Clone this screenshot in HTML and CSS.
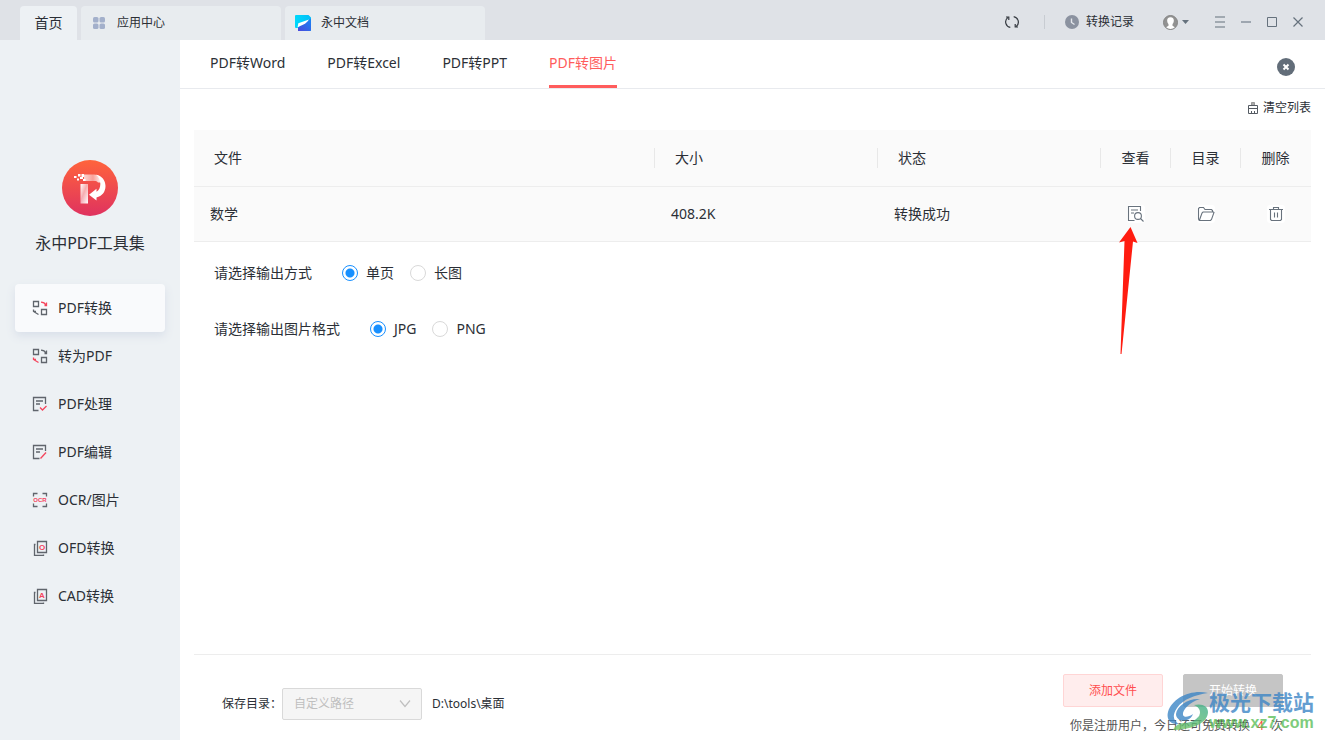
FILE: index.html
```
<!DOCTYPE html>
<html lang="zh-CN">
<head>
<meta charset="utf-8">
<title>永中PDF工具集</title>
<link rel="stylesheet" href="styles.css">
</head>
<body>
<header class="titlebar">
  <nav class="tabs">
    <button class="tab tab-home">首页</button>
    <button class="tab tab-app">
      <svg width="12" height="12" viewBox="0 0 12 12" fill="#a3b0cb"><rect width="5.500" height="5.500" rx="1.600"/><rect x="6.500" width="5.500" height="5.500" rx="1.600"/><rect y="6.500" width="5.500" height="5.500" rx="1.600"/><rect x="6.500" y="6.500" width="5.500" height="5.500" rx="1.600"/></svg>
      <span>应用中心</span>
    </button>
    <button class="tab tab-doc">
      <svg width="16" height="16" viewBox="0 0 16 16"><defs><linearGradient id="docTop" x1="0" y1="0" x2="1" y2="0"><stop offset="0" stop-color="#00d9fb"/><stop offset="1" stop-color="#03bdf8"/></linearGradient><linearGradient id="docLow" x1="0" y1="1" x2="1" y2="0"><stop offset="0" stop-color="#4a48dc"/><stop offset="1" stop-color="#1687f5"/></linearGradient></defs><path d="M1 0h12.500l2.500 2.500V15a1 1 0 0 1-1 1H3V13H1a1 1 0 0 1-1-1V1a1 1 0 0 1 1-1z" fill="url(#docTop)"/><path d="M16 3.500V15a1 1 0 0 1-1 1H3v-3.500z" fill="url(#docLow)"/><path d="M14 4.500 3.300 8.300 2.500 12.500l2-1.200c4-1.500 7.500-3.300 9.500-6.800z" fill="#fff"/></svg>
      <span>永中文档</span>
    </button>
  </nav>
  <div class="tools">
    <button class="icon-btn refresh" aria-label="刷新"><svg width="14" height="14" viewBox="0 0 14 14" fill="none" stroke="#33383f" stroke-width="1.200"><path d="M5.300 12.300A5.500 5.500 0 0 1 2.700 2.600M1 2h2.800v3M8.700 1.700a5.500 5.500 0 0 1 2.600 9.700M13 12h-2.800V9"/></svg></button>
    <span class="divider"></span>
    <button class="icon-btn history"><svg width="14" height="14" viewBox="0 0 14 14"><circle cx="7" cy="7" r="7" fill="#8b92a0"/><path d="M6.500 3.500v4l3 2" fill="none" stroke="#e4e7ec" stroke-width="1.400"/></svg><span>转换记录</span></button>
    <button class="icon-btn user" aria-label="用户"><svg width="26" height="15" viewBox="0 0 26 15"><circle cx="7.500" cy="7.500" r="7" fill="#929292" stroke="#858585"/><path d="M7.500 2.300c2.600 0 3.500 1.600 3.300 3.800-.1 1.500-.8 2.500-1.300 3.200v1.400l2.400 1.600a6.500 6.500 0 0 1-8.800 0l2.400-1.600V9.300C5 8.600 4.300 7.600 4.200 6.100 4 3.900 4.900 2.300 7.500 2.300z" fill="#fff"/><path d="M19 5h7l-3.500 4z" fill="#65717d"/></svg></button>
    <button class="icon-btn" aria-label="菜单"><svg width="12" height="12" viewBox="0 0 12 12" stroke="#65717d" stroke-width="1.200"><path d="M1 1h10M1 6h10M1 11h10"/></svg></button>
    <button class="icon-btn" aria-label="最小化"><svg width="12" height="12" viewBox="0 0 12 12" stroke="#7b8691"><path d="M1 6h10" stroke-width="1.300"/></svg></button>
    <button class="icon-btn" aria-label="最大化"><svg width="12" height="12" viewBox="0 0 12 12" fill="none" stroke="#65717d"><path d="M1.500 1.500h9v9h-9z"/></svg></button>
    <button class="icon-btn" aria-label="关闭窗口"><svg width="12" height="12" viewBox="0 0 12 12" stroke="#65717d" stroke-width="1.200"><path d="m1.500 1.500 9 9m0-9-9 9"/></svg></button>
  </div>
</header>
<div class="shell">
  <aside class="sidebar">
    <div class="brand">
      <svg width="56" height="56" viewBox="0 0 56 56"><defs><linearGradient id="disc" x1="0" y1="0" x2="0" y2="1"><stop offset="0" stop-color="#ff643c"/><stop offset="1" stop-color="#df325f"/></linearGradient><linearGradient id="arc" x1="0" y1="0" x2="1" y2="0"><stop offset="0" stop-color="#fff" stop-opacity=".75"/><stop offset=".5" stop-color="#fff" stop-opacity=".45"/><stop offset="1" stop-color="#fff"/></linearGradient><linearGradient id="stem" x1="0" y1="0" x2="1" y2="1"><stop offset="0" stop-color="#fff"/><stop offset=".45" stop-color="#fff" stop-opacity=".55"/><stop offset="1" stop-color="#fff"/></linearGradient></defs><circle cx="28" cy="28" r="28" fill="url(#disc)"/><path d="M22 14.500h10c5 0 8 3 8 8h-4c-1-1.200-2-1.500-3.500-1.500H22z" fill="url(#arc)"/><path d="M34 14.700c5.800.8 9.500 5.600 9.500 11.300 0 6-3.500 10-9 11.500v2.900L27 34.800l7.500-6v3c5-2.500 5.500-12.800-.5-17.100z" fill="#fff"/><path d="M18.500 24H26v19.500h-7.500z" fill="url(#stem)"/><path d="M12 16h2.500v2H12zm3 2.500h2v2h-2zM16 14h2.500v2.500H16zm3.500 0H22V17h-2.500zM18 17h3v2h-3zm3 2h2.500v2H21z" fill="#fff"/></svg>
      <h1>永中PDF工具集</h1>
    </div>
    <nav class="menu">
      <a class="item active" href="#"><svg class="ico" viewBox="0 0 16 16"><path d="M1.500 1.500h5v5h-5zM9.500 9.500h5v5h-5z"/><path d="M1.500 9.500v2l5 3M1.500 11.300h2.500"/><path class="red" d="M9 2.200c2.500 0 4 1 5 3M14.500 2.500v3h-2"/></svg>PDF转换</a>
      <a class="item" href="#"><svg class="ico" viewBox="0 0 16 16"><path d="M1.500 1.500h5v5h-5zM9.500 9.500h5v5h-5z"/><path class="red" d="M1.500 9.500v2l5 3M1.500 11.300h2.500"/><path d="M9 2.200c2.500 0 4 1 5 3M14.500 2.500v3h-2"/></svg>转为PDF</a>
      <a class="item" href="#"><svg class="ico" viewBox="0 0 16 16"><path d="M13.500 8V1.500h-12v13h5M4 5h7M4 8h4"/><path class="red" d="m8 11.500 2.500 2.500 4-4"/></svg>PDF处理</a>
      <a class="item" href="#"><svg class="ico" viewBox="0 0 16 16"><path d="M13.500 7V1.500h-12v13h6M4 5h7M4 8h4"/><path class="red" d="m8.500 14.500 5.500-6"/></svg>PDF编辑</a>
      <a class="item" href="#"><svg class="ico" viewBox="0 0 16 16"><path d="M1.500 4.500v-3h4M10.500 1.500h4v3M1.500 11.500v3h4M10.500 14.500h4v-3"/><text class="ocr" x="8" y="10">OCR</text></svg>OCR/图片</a>
      <a class="item" href="#"><svg class="ico" viewBox="0 0 16 16"><path d="M5.500 1.500h9v11h-9zM3.500 4.500h-1v11h9v-1"/><text class="letter" x="10" y="10">O</text></svg>OFD转换</a>
      <a class="item" href="#"><svg class="ico" viewBox="0 0 16 16"><path d="M5.500 1.500h9v11h-9zM3.500 4.500h-1v11h9v-1"/><text class="letter" x="10" y="10">A</text></svg>CAD转换</a>
    </nav>
  </aside>
  <main class="main">
    <div class="subtabs">
      <nav class="subnav">
        <a href="#">PDF转Word</a><a href="#">PDF转Excel</a><a href="#">PDF转PPT</a><a class="current" href="#">PDF转图片</a>
      </nav>
      <button class="close" aria-label="关闭"><svg width="18" height="18" viewBox="0 0 18 18"><circle cx="9" cy="9" r="9" fill="#626d79"/><path d="m6.500 6.500 5 5m0-5-5 5" stroke="#fff" stroke-width="2"/></svg></button>
    </div>
    <div class="content">
      <button class="clear"><svg width="12" height="12" viewBox="0 0 12 12" fill="none" stroke="#555b63"><path d="M4.500 3V.5h3V3" fill="#aaa" stroke="#999"/><path d="M1.500 6V3.500h9V6M1 6.500h10M1.500 6.500v5h9v-5M4.500 11.500V9M7.500 11.500V9"/></svg>清空列表</button>
      <table class="files">
        <colgroup><col><col class="c-mid"><col class="c-mid"><col class="c-act"><col class="c-act"><col class="c-act"></colgroup>
        <thead><tr><th><span>文件</span></th><th><span>大小</span></th><th><span>状态</span></th><th class="act"><span>查看</span></th><th class="act"><span>目录</span></th><th class="act"><span>删除</span></th></tr></thead>
        <tbody><tr><td>数学</td><td>408.2K</td><td>转换成功</td>
          <td class="act"><button class="row-btn" aria-label="查看"><svg width="18" height="18" viewBox="0 0 18 18"><path d="M13.500 6V1.500h-12v14h6M4 5h7M4 8h3"/><circle cx="11" cy="11" r="3.400"/><path d="m13.500 13.500 3 3"/></svg></button></td>
          <td class="act"><button class="row-btn" aria-label="目录"><svg width="18" height="18" viewBox="0 0 18 18"><path d="M1.500 14.500v-11l1-1h4L8 4.500h6.500l1 1v1.500M1.500 14.500l1 1h11l1-1L17 7.500l-.5-.5H6l-1 1-2.500 7"/></svg></button></td>
          <td class="act"><button class="row-btn" aria-label="删除"><svg width="18" height="18" viewBox="0 0 18 18"><path d="M2 4.500h14M6.500 4.500v-2h5v2M3.500 4.500v10l1 1h9l1-1v-10M7.500 7.500v5M10.500 7.500v5"/></svg></button></td></tr></tbody>
      </table>
      <svg class="pointer" width="20" height="128" viewBox="0 0 20 128"><path d="M11.500 0 18.500 16l-4.500-1.500L2.500 127H1.500L5.500 14 0 15.500z" fill="#ff1c10"/></svg>
      <fieldset class="options"><legend>请选择输出方式</legend>
        <label><input type="radio" name="mode" checked>单页</label><label><input type="radio" name="mode">长图</label></fieldset>
      <fieldset class="options"><legend>请选择输出图片格式</legend>
        <label><input type="radio" name="format" checked>JPG</label><label><input type="radio" name="format">PNG</label></fieldset>
    </div>
    <footer class="footer">
      <div class="save">
        <label for="dir">保存目录：</label>
        <div class="select-wrap"><select id="dir" disabled><option>自定义路径</option></select><svg class="chevron" width="12" height="10" viewBox="0 0 12 10" fill="none" stroke="#bfbfbf" stroke-width="1.200"><path d="m1 1.500 5 6 5-6"/></svg></div>
        <span class="path">D:\tools\桌面</span>
      </div>
      <div class="actions">
        <div class="buttons"><button class="btn add">添加文件</button><button class="btn start" disabled>开始转换</button></div>
        <p class="quota">你是注册用户，今日还可免费转换<b>4</b>次</p>
      </div>
    </footer>
  </main>
</div>
<div class="watermark">
  <svg width="42" height="40" viewBox="0 0 42 40"><defs><linearGradient id="leaf" x1="1" y1="0" x2="0" y2="1"><stop offset="0" stop-color="#3fae8c"/><stop offset="1" stop-color="#7cca5c"/></linearGradient></defs><path d="M41 2C24-2 5 7 1 21c-2 8 3 13 11 12-6-3-7-9-2-16C16 8 28 4 41 2z" fill="#3d86c6"/><path d="M33 8C21 7 10 15 9 23c0 5 5 8 11 6 3-1 5-3 6-6-4 3-9 4-10 1-1-5 7-13 17-16z" fill="#3d86c6"/><path d="M27 14c8-2 14 1 14 7 0 10-13 17-34 18 13-3 25-9 26-17 0-4-2-6-6-8z" fill="url(#leaf)"/><path d="M6 39c2-4 6-7 11-7 6 0 11-2 15-7-2 8-12 13-26 14z" fill="url(#leaf)"/></svg>
  <div class="mark-text"><strong>极光下载站</strong><span>www.xz7.com</span></div>
</div>
</body>
</html>
```

FILE: styles.css
```
* { box-sizing: border-box; }

body {
  margin: 0;
  min-height: 100vh;
  display: flex;
  flex-direction: column;
  position: relative;
  background: #fff;
  color: #2b2f36;
  font: 14px/20px "Noto Sans", "Noto Sans CJK SC", sans-serif;
}

button { border: 0; padding: 0; background: none; color: inherit; font: inherit; cursor: pointer; }
a { color: inherit; text-decoration: none; }
svg { display: block; flex: none; }

.titlebar { height: 40px; display: flex; justify-content: space-between; background: #dfe2e7; font-size: 12px; }
.tabs { display: flex; align-items: flex-end; gap: 4px; padding-left: 20px; }
.tab { height: 34px; display: flex; align-items: center; background: #e8ecef; border-radius: 4px 4px 0 0; }
.tab-home { width: 57px; justify-content: center; background: #edf1f4; font-size: 14px; }
.tab-app { width: 200px; gap: 12px; padding-left: 12px; }
.tab-doc { width: 200px; gap: 10px; padding-left: 10px; }
.tools { display: flex; align-items: center; gap: 14px; padding: 4px 21px 0 0; }
.icon-btn { display: flex; align-items: center; gap: 7px; }
.refresh { margin-right: 11px; }
.divider { width: 1px; height: 14px; margin-right: 6px; background: #c8ccd2; }
.history { margin-right: 15px; }
.user { margin-right: 11px; }

.shell { flex: 1; display: flex; }
.sidebar { width: 180px; flex: none; background: #edf1f4; }
.brand { display: flex; flex-direction: column; align-items: center; gap: 16px; padding: 120px 0 29px; }
.brand h1 { margin: 0; font-size: 16px; line-height: 23px; font-weight: 400; }
.menu { padding: 0 15px; }
.item { height: 48px; display: flex; align-items: center; gap: 10px; padding-left: 17px; border-radius: 4px; }
.item.active { background: #f9fafc; box-shadow: 0 4px 10px #d9dfe9; }
.ico { width: 16px; height: 16px; fill: none; stroke: #60656c; stroke-width: 1.3; }
.ico .red { stroke: #f5455c; }
.ico text { fill: #f5455c; stroke: none; text-anchor: middle; font-family: "Liberation Sans", sans-serif; font-weight: 700; }
.ico .ocr { font-size: 6px; }
.ico .letter { font-size: 8px; }

.main { flex: 1; min-width: 0; display: flex; flex-direction: column; }
.subtabs { height: 49px; display: flex; justify-content: space-between; align-items: flex-start; padding: 0 30px; border-bottom: 1px solid #e8eaee; }
.subnav { display: flex; gap: 42px; }
.subnav a { height: 48px; padding-top: 13px; }
.subnav .current { color: #ff5c5c; border-bottom: 3px solid #ff5c5c; }
.close { margin-top: 18px; }
.content { flex: 1; display: flex; flex-direction: column; position: relative; margin: 0 14px; }
.clear { align-self: flex-end; display: flex; align-items: center; gap: 4px; margin: 9px 0 12px; font-size: 12px; }

.files { width: 100%; table-layout: fixed; border-collapse: separate; border-spacing: 0; background: #fafafa; }
.c-mid { width: 223px; }
.c-act { width: 70px; }
.files th, .files td { padding: 0 0 0 16px; border-bottom: 1px solid #ededed; text-align: left; font-weight: 400; }
.files th { height: 57px; padding: 0; }
.files td { height: 55px; }
.files th span { display: block; padding-left: 20px; border-right: 1px solid #e8e8e8; }
.files th:last-child span { border-right-color: transparent; }
.files th.act span { padding: 0; text-align: center; }
.files td.act { padding: 0; }
.row-btn { display: block; margin: 0 auto; background: #fff; border-radius: 3px; }
.row-btn svg { fill: none; stroke: #68727d; stroke-width: 1.1; }
.pointer { position: absolute; top: 138px; right: 172px; }

.options { height: 20px; display: flex; align-items: center; margin: 21px 0 0; padding: 0 0 0 20px; border: 0; }
.options + .options { margin-top: 36px; }
.options legend { float: left; padding: 0; margin-right: 30px; }
.options label { display: flex; align-items: center; gap: 8px; margin-right: 16px; }
.options input { appearance: none; width: 16px; height: 16px; margin: 0; border: 1px solid #d9d9d9; border-radius: 50%; background: #fff; }
.options input:checked { border-color: #1890ff; background: radial-gradient(circle, #1890ff 4px, #fff 5px); }

.footer { display: flex; justify-content: space-between; margin: 0 14px; padding: 19px 28px 4px; border-top: 1px solid #ededed; font-size: 12px; }
.save { height: 32px; display: flex; align-items: center; margin-top: 14px; }
.select-wrap { position: relative; }
.select-wrap select { appearance: none; width: 140px; height: 32px; padding: 0 11px; border: 1px solid #d9d9d9; border-radius: 2px; background: #f5f5f5; color: #bfbfbf; font: inherit; opacity: 1; }
.chevron { position: absolute; top: 11px; right: 11px; }
.path { margin-left: 10px; }
.actions { display: flex; flex-direction: column; align-items: flex-end; }
.buttons { display: flex; gap: 20px; }
.btn { width: 100px; height: 33px; border: 1px solid #ffd5d5; border-radius: 2px; }
.add { background: #ffeded; color: #ff4d4f; }
.start { border-color: #c5c5c5; background: #c5c5c5; color: #fff; }
.quota { margin: 9px 0 0; color: #555; }
.quota b { margin: 0 7px; color: #f04a3c; font-weight: 400; }

.watermark { position: absolute; right: 11px; bottom: 8px; display: flex; align-items: center; opacity: .8; }
.mark-text { display: flex; flex-direction: column; align-items: center; }
.mark-text strong { color: #3d86c6; font-size: 21px; line-height: 24px; }
.mark-text span { color: #5fc05c; font: 700 16px/18px "Liberation Sans", sans-serif; }
```
